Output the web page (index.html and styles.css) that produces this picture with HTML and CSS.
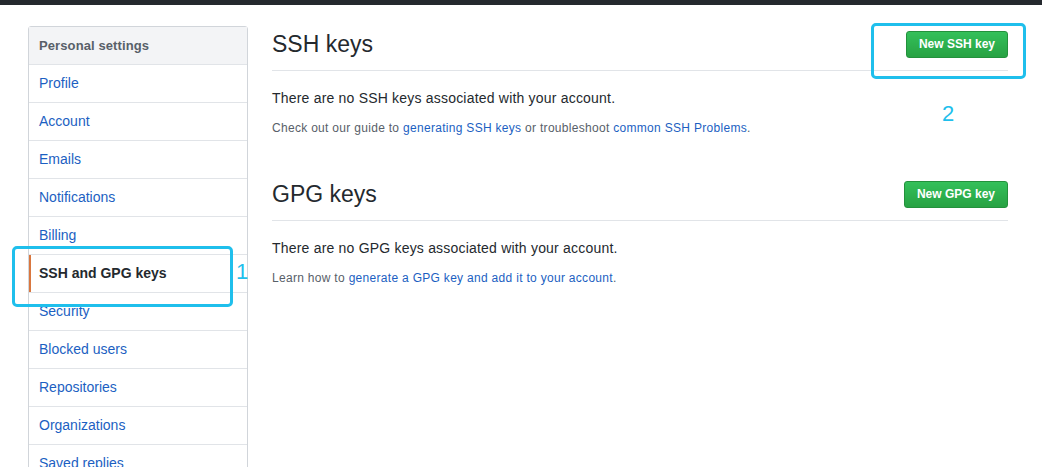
FILE: index.html
```html
<!DOCTYPE html>
<html lang="en">
<head>
  <meta charset="UTF-8" />
  <meta name="viewport" content="width=device-width, initial-scale=1.0"/>
  <title>SSH and GPG keys</title>
  <link rel="stylesheet" href="styles.css">
</head>
<body>

<div class="topbar"></div>

<div class="container">
  <nav class="menu">
    <div class="menu-heading">Personal settings</div>
    <a class="menu-item" href="#">Profile</a>
    <a class="menu-item" href="#">Account</a>
    <a class="menu-item" href="#">Emails</a>
    <a class="menu-item" href="#">Notifications</a>
    <a class="menu-item" href="#">Billing</a>
    <a class="menu-item selected" href="#">SSH and GPG keys</a>
    <a class="menu-item" href="#">Security</a>
    <a class="menu-item" href="#">Blocked users</a>
    <a class="menu-item" href="#">Repositories</a>
    <a class="menu-item" href="#">Organizations</a>
    <a class="menu-item" href="#">Saved replies</a>

    <div class="mark mark-1"></div>
    <span class="mark-num num-1">1</span>
  </nav>

  <main class="content">
    <section class="subhead">
      <div class="subhead-row">
        <h2>SSH keys</h2>
        <button class="btn">New SSH key</button>
      </div>
      <p class="blank">There are no SSH keys associated with your account.</p>
      <p class="note">Check out our guide to <a href="#">generating SSH keys</a> or troubleshoot <a href="#">common SSH Problems</a>.</p>
    </section>

    <section class="subhead spacious">
      <div class="subhead-row">
        <h2>GPG keys</h2>
        <button class="btn">New GPG key</button>
      </div>
      <p class="blank">There are no GPG keys associated with your account.</p>
      <p class="note">Learn how to <a href="#">generate a GPG key and add it to your account</a>.</p>
    </section>

    <div class="mark mark-2"></div>
    <span class="mark-num num-2">2</span>
  </main>
</div>

</body>
</html>
```

FILE: styles.css
```css
body { margin: 0; font-family: "Liberation Sans", Arial, sans-serif; font-size: 14px; line-height: 1.5; color: #24292e; background: #fff; overflow: hidden; }
a { color: #1c5fc2; text-decoration: none; }

.topbar { height: 5px; background: #24292e; }

.container { display: flex; gap: 24px; width: 980px; margin-left: 28px; padding-top: 21px; }

.menu { position: relative; flex: 0 0 220px; box-sizing: border-box; border: 1px solid #d1d5da; border-radius: 3px 3px 0 0; }
.menu-heading { padding: 9px 10px 8px; line-height: 20px; font-size: 13px; font-weight: bold; letter-spacing: 0.1px; color: #586069; background: #f3f4f6; border-bottom: 1px solid #e1e4e8; }
.menu-item { display: block; padding: 8px 10px; line-height: 21px; border-bottom: 1px solid #e1e4e8; }
.menu-item.selected { font-weight: bold; color: #24292e; position: relative; }
.menu-item.selected::before { content: ""; position: absolute; left: 0; top: 0; bottom: 0; width: 2px; background: #d9773f; }

.content { position: relative; flex: 1; }
.subhead-row { display: flex; align-items: center; justify-content: space-between; padding-bottom: 8px; margin-bottom: 17px; border-bottom: 1px solid #e1e4e8; }
.subhead-row h2 { margin: 0; font-size: 23px; font-weight: normal; line-height: 36px; }
.spacious { margin-top: 39px; }
.blank { margin: 0 0 10px; letter-spacing: 0.2px; }
.note { margin: 0; font-size: 12px; line-height: 18px; letter-spacing: 0.3px; color: #586069; }

.btn { padding: 3px 12px; font-family: inherit; font-size: 12px; font-weight: bold; line-height: 19px; color: #fff; border: 1px solid #23913c; border-radius: 3px; background: linear-gradient(#34c05a, #27a243); }

.mark { position: absolute; border: 3px solid #1fbfec; border-radius: 5px; }
.mark-num { position: absolute; color: #1fbfec; font-size: 22px; line-height: 22px; }
.mark-1 { left: -17px; top: 219px; width: 215px; height: 55px; }
.num-1 { left: 207px; top: 234px; }
.mark-2 { left: 599px; top: -3px; width: 149px; height: 50px; }
.num-2 { left: 670px; top: 77px; }
```
